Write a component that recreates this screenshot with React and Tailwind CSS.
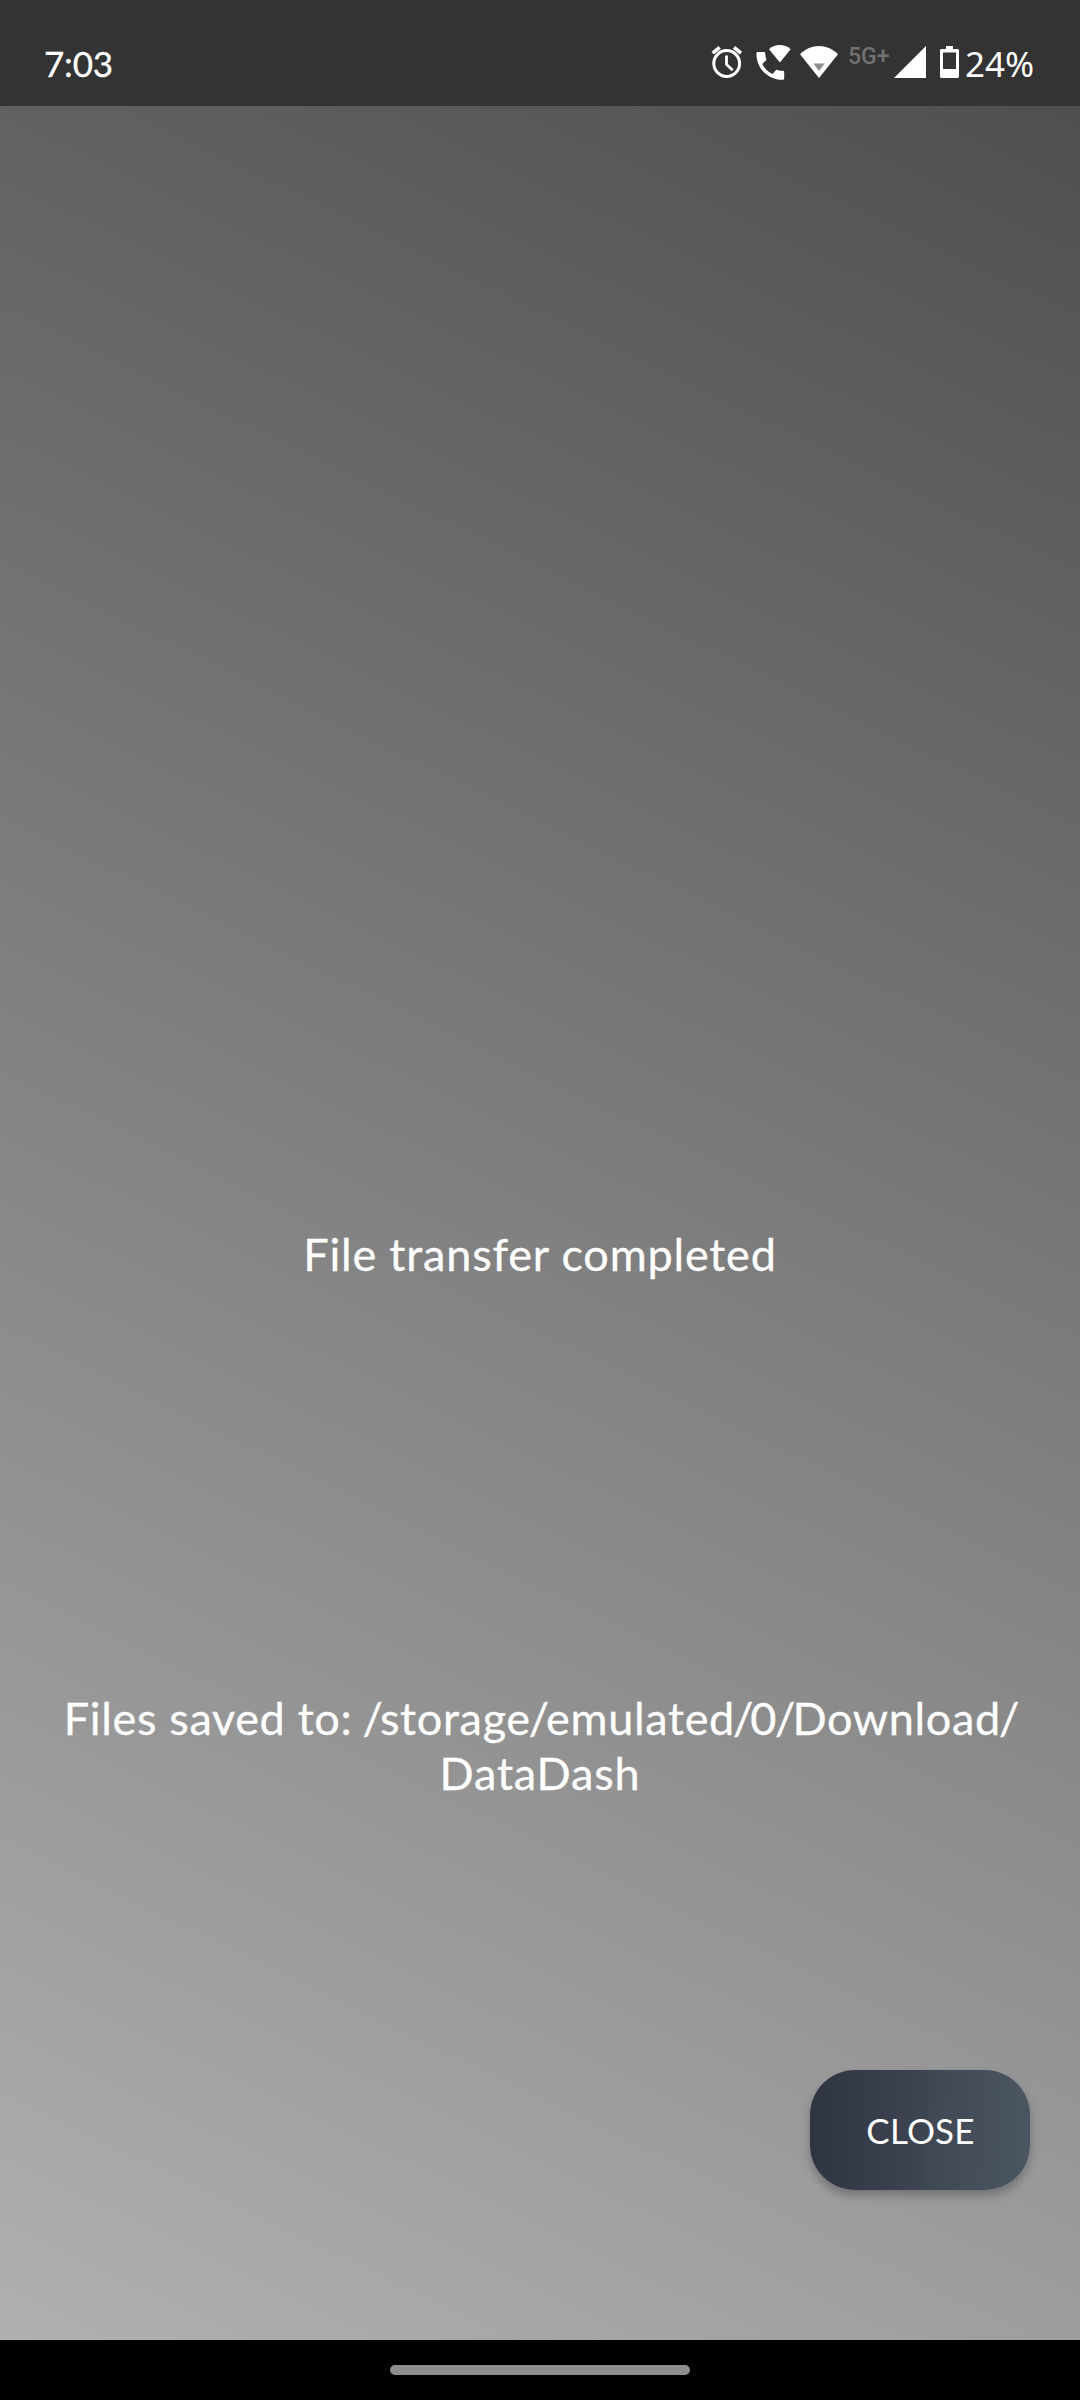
function AlarmIcon() {
  return (
    <svg width="32" height="34" viewBox="0 0 32 34" fill="none" stroke="white">
      <circle cx="15.7" cy="18.5" r="12.9" strokeWidth="3" />
      <path d="M15.5 10.5v9l6.2 5.7" strokeWidth="2.8" />
      <path d="M1.7 8.2l7-5.8M30 8.2l-7-5.8" strokeWidth="3.6" />
    </svg>
  );
}

function WifiCallIcon() {
  return (
    <svg width="36" height="38" viewBox="0 0 36 38" fill="white">
      <path d="M1.8 8h6.1c.8 0 1.400.6 1.400 1.400 0 2 .3 3.800.9 5.600.2.6 0 1.100-.4 1.500l-3.500 3.400c2.400 4.600 5.600 7.800 10.300 10l3.200-3.600c.4-.4 1-.6 1.500-.4 1.800.6 3.600.9 5.500.9.8 0 1.400.6 1.400 1.400v6.200c0 .8-.6 1.400-1.400 1.400C12 35.900.4 24.300.4 9.400.4 8.600 1 8 1.800 8z" />
      <path d="M13 5.200C19-.3 28.500-.3 34.700 5.200L23.900 18.600z" />
    </svg>
  );
}

function WifiIcon() {
  return (
    <svg width="38" height="33" viewBox="0 0 38 33">
      <path d="M0 8.300C10.800-2.700 27.200-2.700 38 8.300L19 32z" fill="white" />
      <path d="M13.300 17.500h11.400L19 25z" fill="#8f8f8f" />
    </svg>
  );
}

function SignalIcon() {
  return (
    <svg width="32" height="32" viewBox="0 0 32 32">
      <path d="M0 32L32 0v32z" fill="white" />
    </svg>
  );
}

function BatteryIcon() {
  return (
    <svg width="19" height="32" viewBox="0 0 19 32" fill="white" fillRule="evenodd">
      <path d="M6 0h7v3h4.500c.8 0 1.500.7 1.500 1.500v26c0 .8-.7 1.500-1.500 1.500h-16C.7 32 0 31.300 0 30.500v-26C0 3.700.7 3 1.500 3H6zM3 6.500v16.500h13V6.500z" />
    </svg>
  );
}

function StatusBar() {
  return (
    <header className="flex h-[106px] items-start justify-between bg-[#333333] pr-[45px] pl-[44px] pt-[44px] text-white">
      <span className="-mt-px text-[35px] leading-[40px] tracking-[-0.2px] [-webkit-text-stroke:0.3px_white]">7:03</span>
      <div className="flex items-start">
        <div className="mr-[13px] mt-[1px]"><AlarmIcon /></div>
        <div className="mr-[8px]"><WifiCallIcon /></div>
        <div className="mr-[10px] mt-[2px]"><WifiIcon /></div>
        <span className="mr-[5px] mt-px w-[41px] whitespace-nowrap font-[Roboto] text-[23px] font-medium leading-[23px] text-[#717171]">5G+</span>
        <div className="mr-[14px] mt-[2px]"><SignalIcon /></div>
        <div className="mr-[6px] mt-[2px]"><BatteryIcon /></div>
        <span className="w-[70px] whitespace-nowrap font-['Noto_Sans'] text-[35px] leading-[40px]">24%</span>
      </div>
    </header>
  );
}

function Slash() {
  return <span className="-ml-[2px] tracking-[-3px]">/</span>;
}

export default function App() {
  return (
    <div className="flex h-[2400px] w-[1080px] flex-col overflow-hidden font-[Lato,sans-serif]">
      <StatusBar />
      <main className="flex h-[2234px] flex-col bg-[linear-gradient(25.8deg,#b0b0b0,#4f4f4f)] text-center text-[45px] leading-[55px] tracking-[0.8px] text-white [-webkit-text-stroke:0.3px_white]">
        <p className="mt-[1121px] whitespace-nowrap">File transfer completed</p>
        <p className="mt-[409px] whitespace-nowrap">
          <span className="tracking-[0.66px]">
            Files saved to: <Slash />storage<Slash />emulated<Slash />0<Slash />Download<Slash />
          </span>
          <br />
          DataDash
        </p>
        <button className="mt-[269px] mr-[50px] h-[120px] w-[220px] self-end rounded-[45px] bg-[linear-gradient(92deg,#2e3440,#3d4351_49%,#3f4853_55%,#4c5663)] pl-px text-[35px] tracking-[0.2px] text-white shadow-[0_6px_10px_rgba(0,0,0,0.25)] [-webkit-text-stroke:0px]">
          CLOSE
        </button>
      </main>
      <footer className="flex h-[60px] justify-center bg-black pt-[25px]">
        <div className="h-[10px] w-[300px] rounded-full bg-[#8e8e8e]" />
      </footer>
    </div>
  );
}
